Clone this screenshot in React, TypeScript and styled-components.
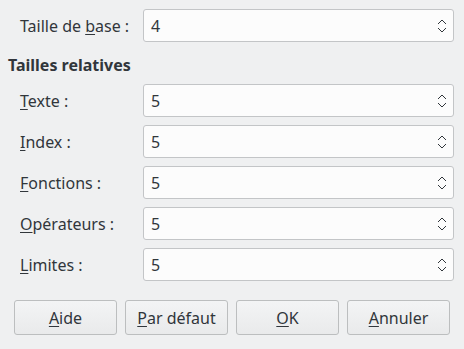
import React from 'react';
import styled, { createGlobalStyle } from 'styled-components';

const GlobalStyle = createGlobalStyle`
  html, body {
    margin: 0;
    padding: 0;
    background: #eff0f1;
  }
  body {
    font-family: 'Noto Sans', 'Open Sans', sans-serif;
    font-size: 16px;
    color: #31363b;
  }
`;

interface SizeRow {
  key: string;
  after: string;
  value: number;
}

const relativeRows: SizeRow[] = [
  { key: 'T', after: 'exte :', value: 5 },
  { key: 'I', after: 'ndex :', value: 5 },
  { key: 'F', after: 'onctions :', value: 5 },
  { key: 'O', after: 'pérateurs :', value: 5 },
  { key: 'L', after: 'imites :', value: 5 },
];

const buttons = [
  { key: 'A', rest: 'ide' },
  { key: 'P', rest: 'ar défaut' },
  { key: 'O', rest: 'K' },
  { key: 'A', rest: 'nnuler' },
];

const SpinArrows: React.FC = () => (
  <svg width="10" height="16" viewBox="0 0 10 16" fill="none">
    <path d="M1 6 L5 2 L9 6" stroke="#31363b" strokeWidth="1" />
    <path d="M1 10 L5 14 L9 10" stroke="#31363b" strokeWidth="1" />
  </svg>
);

const SpinBox: React.FC<{ value: number }> = ({ value }) => (
  <Spin>
    <SpinValue>{value}</SpinValue>
    <SpinButton>
      <SpinArrows />
    </SpinButton>
  </Spin>
);

const App: React.FC = () => {
  return (
    <>
      <GlobalStyle />
      <Dialog>
        <Row>
          <Label>
            Taille de <Key>b</Key>ase :
          </Label>
          <SpinBox value={4} />
        </Row>
        <Heading>Tailles relatives</Heading>
        <Rows>
          {relativeRows.map((r) => (
            <Row key={r.after}>
              <Label>
                <Key>{r.key}</Key>
                {r.after}
              </Label>
              <SpinBox value={r.value} />
            </Row>
          ))}
        </Rows>
        <ButtonBar>
          {buttons.map((b, i) => (
            <Button key={i}>
              <Key>{b.key}</Key>
              {b.rest}
            </Button>
          ))}
        </ButtonBar>
      </Dialog>
    </>
  );
};

const Dialog = styled.div`
  width: 464px;
  height: 349px;
  box-sizing: border-box;
  padding: 9px 10px 0 8px;
  display: flex;
  flex-direction: column;
`;

const Rows = styled.div`
  display: flex;
  flex-direction: column;
  gap: 8px;
`;

const Row = styled.div`
  display: grid;
  grid-template-columns: 123px 1fr;
  align-items: center;
  padding-left: 12px;
`;

const Label = styled.label`
  white-space: nowrap;
  line-height: 20px;
`;

const Key = styled.span`
  text-decoration: underline;
  text-underline-offset: 2px;
`;

const Heading = styled.div`
  font-weight: bold;
  line-height: 20px;
  margin: 13px 0 9px;
`;

const Spin = styled.div`
  height: 33px;
  box-sizing: border-box;
  background: #fcfcfc;
  border: 1px solid #c3c5c7;
  border-radius: 3px;
  display: flex;
  align-items: center;
  padding: 0 6px 0 7px;
`;

const SpinValue = styled.span`
  flex: 1;
`;

const SpinButton = styled.span`
  display: flex;
  align-items: center;
`;

const ButtonBar = styled.div`
  display: grid;
  grid-template-columns: repeat(4, 103px);
  gap: 8px;
  margin: 19px 0 0 6px;
`;

const Button = styled.button`
  height: 35px;
  font-family: inherit;
  font-size: 16px;
  color: #31363b;
  border: 1px solid #bcbebf;
  border-radius: 3px;
  background: linear-gradient(#f3f4f5, #e9eaeb);
  padding: 0;
`;

export default App;
